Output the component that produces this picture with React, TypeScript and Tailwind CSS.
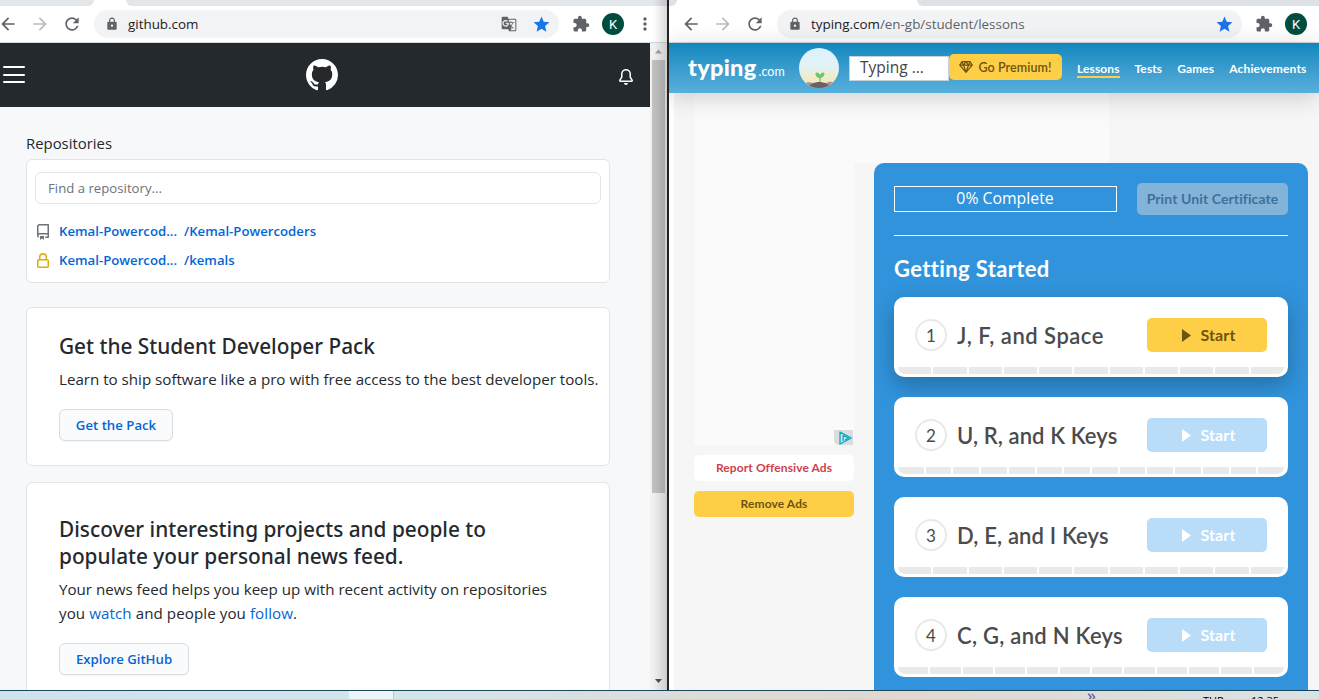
import React from "react";
import { MdArrowBack, MdArrowForward, MdRefresh, MdLock, MdStar, MdExtension, MdMoreVert, MdGTranslate } from "react-icons/md";

function Octicon({ d, size = 16, className = "" }: { d: string; size?: number; className?: string }) {
  return (
    <svg width={size} height={size} viewBox="0 0 16 16" fill="currentColor" fillRule="evenodd" className={`shrink-0 ${className}`}>
      <path d={d} />
    </svg>
  );
}

const MARK =
  "M8 0C3.58 0 0 3.58 0 8c0 3.54 2.29 6.53 5.47 7.59.4.07.55-.17.55-.38 0-.19-.01-.82-.01-1.49-2.01.37-2.53-.49-2.69-.94-.09-.23-.48-.94-.82-1.13-.28-.15-.68-.52-.01-.53.63-.01 1.08.58 1.23.82.72 1.21 1.87.87 2.33.66.07-.52.28-.87.51-1.07-1.78-.2-3.64-.89-3.64-3.95 0-.87.31-1.59.82-2.15-.08-.2-.36-1.02.08-2.12 0 0 .67-.21 2.2.82.64-.18 1.32-.27 2-.27.68 0 1.36.09 2 .27 1.53-1.04 2.2-.82 2.2-.82.44 1.1.16 1.92.08 2.12.51.56.82 1.27.82 2.15 0 3.07-1.87 3.75-3.65 3.95.29.25.54.73.54 1.48 0 1.07-.01 1.93-.01 2.2 0 .21.15.46.55.38A8.013 8.013 0 0016 8c0-4.42-3.58-8-8-8z";
const REPO =
  "M2 2.5A2.5 2.5 0 014.5 0h8.75a.75.75 0 01.75.75v12.5a.75.75 0 01-.75.75h-2.5a.75.75 0 110-1.5h1.75v-2h-8a1 1 0 00-.714 1.7.75.75 0 01-1.072 1.05A2.495 2.495 0 012 11.5v-9zm10.5-1V9h-8c-.356 0-.694.074-1 .208V2.5a1 1 0 011-1h8zM5 12.25v3.25a.25.25 0 00.4.2l1.45-1.087a.25.25 0 01.3 0L8.6 15.7a.25.25 0 00.4-.2v-3.25a.25.25 0 00-.25-.25h-3.5a.25.25 0 00-.25.25z";
const LOCK =
  "M4 4v2h-.25A1.75 1.75 0 002 7.75v5.5c0 .966.784 1.75 1.75 1.75h8.5A1.75 1.75 0 0014 13.25v-5.5A1.75 1.75 0 0012.25 6H12V4a4 4 0 10-8 0zm6.5 2V4a2.5 2.5 0 10-5 0v2h5zM12 7.5h.25a.25.25 0 01.25.25v5.5a.25.25 0 01-.25.25h-8.5a.25.25 0 01-.25-.25v-5.5a.25.25 0 01.25-.25H12z";
const BELL =
  "M8 16a2 2 0 001.985-1.75c.017-.137-.097-.25-.235-.25h-3.5c-.138 0-.252.113-.235.25A2 2 0 008 16zM8 1.5A3.5 3.5 0 004.5 5v2.947c0 .346-.102.683-.294.97l-1.703 2.583h10.994l-1.703-2.583a1.75 1.75 0 01-.294-.97V5A3.5 3.5 0 008 1.5zM3 5a5 5 0 0110 0v2.947c0 .05.015.098.042.139l1.703 2.555A1.518 1.518 0 0113.482 13H2.518a1.518 1.518 0 01-1.263-2.36l1.703-2.554A.25.25 0 003 7.947V5z";

function Avatar() {
  return (
    <div className="flex h-[22px] w-[22px] shrink-0 items-center justify-center rounded-full bg-[#004d40] font-['Roboto',sans-serif] text-[13px] leading-none text-white">
      K
    </div>
  );
}

function NavButtons() {
  return (
    <div className="flex shrink-0 items-center gap-3 text-[#5f6368]">
      <MdArrowBack size={20} />
      <MdArrowForward size={20} className="text-[#babcbe]" />
      <MdRefresh size={20} />
    </div>
  );
}

function GithubWindow() {
  return (
    <section className="relative flex h-full w-[667px] shrink-0 flex-col bg-white font-['Open_Sans',sans-serif] text-[#24292e]">
      <div className="flex h-[6px] shrink-0 justify-between">
        <div className="w-[94px] rounded-br-[7px] bg-[#e3e7ea]" />
        <div className="w-[541px] rounded-bl-[7px] bg-[#e3e7ea]" />
      </div>
      <div className="flex h-[37px] shrink-0 items-center border-b border-[#d5d9dc]">
        <div className="-ml-[2px]">
          <NavButtons />
        </div>
        <div className="ml-[12px] flex h-7 w-[465px] items-center rounded-full bg-[#f1f3f4] pl-[11px] pr-[8px]">
          <MdLock size={14} className="text-[#5f6368]" />
          <span className="ml-[9px] pt-px text-[13.4px] leading-none text-[#202124]">github.com</span>
          <MdGTranslate size={16} className="ml-auto text-[#5f6368]" />
          <MdStar size={19} className="ml-[15px] text-[#1a73e8]" />
        </div>
        <MdExtension size={18} className="ml-[13px] text-[#5f6368]" />
        <div className="ml-[12px]">
          <Avatar />
        </div>
        <MdMoreVert size={20} className="ml-[11px] text-[#5f6368]" />
      </div>
      <div className="flex min-h-0 flex-1">
        <div className="flex w-[650px] flex-col overflow-hidden bg-[#f6f8fa]">
          <header className="flex h-16 shrink-0 items-center justify-between bg-[#24292e] pl-[3px] pr-[16px] text-white">
            <div className="-mt-px flex w-[22px] flex-col gap-[5.5px]">
              <div className="h-[2px] rounded bg-white" />
              <div className="h-[2px] rounded bg-white" />
              <div className="h-[2px] rounded bg-white" />
            </div>
            <Octicon d={MARK} size={32} />
            <Octicon d={BELL} className="mt-[3px]" />
          </header>
          <div className="pl-[26px] pr-[40px]">
            <h2 className="mt-[26px] h-[26px] text-[14.9px] leading-5">Repositories</h2>
            <div className="h-[124px] rounded-md border border-[#e1e4e8] bg-white px-2 pt-3">
              <div className="flex h-8 items-center rounded-md border border-[#e1e4e8] px-3 pt-px text-[13.2px] leading-none text-[#6a737d]">
                Find a repository...
              </div>
              <div className="mt-[17px] flex h-5 items-center text-[13.2px] font-semibold leading-none text-[#0366d6]">
                <Octicon d={REPO} className="mt-px text-[#6a737d]" />
                <span className="ml-2 pt-[2px]">Kemal-Powercod...</span>
                <span className="ml-[7px] pt-[2px]">/Kemal-Powercoders</span>
              </div>
              <div className="mt-[9px] flex h-5 items-center text-[13.2px] font-semibold leading-none text-[#0366d6]">
                <Octicon d={LOCK} className="mt-px text-[#dbab09]" />
                <span className="ml-2 pt-[2px]">Kemal-Powercod...</span>
                <span className="ml-[7px] pt-[2px]">/kemals</span>
              </div>
            </div>
            <div className="mt-6 h-[159px] rounded-md border border-[#e1e4e8] bg-white px-8 pt-[25px]">
              <h3 className="font-['Noto_Sans','Open_Sans',sans-serif] text-[20.8px] font-medium leading-[27px]">Get the Student Developer Pack</h3>
              <p className="mt-[7px] whitespace-nowrap text-[15.13px] leading-6">Learn to ship software like a pro with free access to the best developer tools.</p>
              <div className="mt-[18px] flex h-8 w-[114px] items-center justify-center whitespace-nowrap rounded-md border border-[#dadde0] bg-[#fafbfc] pt-[2px] text-[13.2px] font-semibold leading-none text-[#0366d6] shadow-[0_1px_0_rgba(27,31,35,0.04)]">
                Get the Pack
              </div>
            </div>
            <div className="mt-4 h-[240px] rounded-md border border-[#e1e4e8] bg-white px-8 pt-[33px]">
              <h3 className="whitespace-nowrap font-['Noto_Sans','Open_Sans',sans-serif] text-[20.8px] font-medium leading-[27px]">
                Discover interesting projects and people to
                <br />
                populate your personal news feed.
              </h3>
              <p className="mt-[7px] whitespace-nowrap text-[15.13px] leading-6">
                Your news feed helps you keep up with recent activity on repositories
                <br />
                <span className="tracking-[0.08px]">you <span className="text-[#0366d6]">watch</span> and people you <span className="text-[#0366d6]">follow</span>.</span>
              </p>
              <div className="mt-[18px] flex h-8 w-[130px] items-center justify-center whitespace-nowrap rounded-md border border-[#dadde0] bg-[#fafbfc] pt-[2px] text-[13.2px] font-semibold leading-none text-[#0366d6] shadow-[0_1px_0_rgba(27,31,35,0.04)]">
                Explore GitHub
              </div>
            </div>
          </div>
        </div>
        <div className="flex w-[17px] flex-col items-center bg-[#f1f1f1]">
          <svg className="mt-[6px] shrink-0" width="7" height="5" viewBox="0 0 7 5">
            <path d="M0 4.500L3.500 0.500L7 4.500Z" fill="#a3a3a3" />
          </svg>
          <div className="mt-[6px] h-[433px] w-[13px] shrink-0 bg-[#c1c1c1]" />
          <svg className="mb-[7px] mt-auto shrink-0" width="7" height="4" viewBox="0 0 7 4">
            <path d="M0 0L3.500 4L7 0Z" fill="#505050" />
          </svg>
        </div>
      </div>
      <div className="absolute inset-y-0 right-0 w-[14px] bg-gradient-to-r from-transparent to-black/15" />
    </section>
  );
}

type Lesson = { n: number; title: string; parts: number; tracking: string };

const lessons: Lesson[] = [
  { n: 1, title: "J, F, and Space", parts: 11, tracking: "tracking-[0.5px]" },
  { n: 2, title: "U, R, and K Keys", parts: 14, tracking: "tracking-[0.1px]" },
  { n: 3, title: "D, E, and I Keys", parts: 11, tracking: "tracking-[0.15px]" },
  { n: 4, title: "C, G, and N Keys", parts: 12, tracking: "tracking-[0.27px]" },
];

function LessonCard({ lesson }: { lesson: Lesson }) {
  const active = lesson.n === 1;
  return (
    <div className={`flex h-20 shrink-0 flex-col rounded-[10px] bg-white px-1 pb-[3px] ${active ? "shadow-[0_8px_22px_rgba(0,0,0,0.25)]" : ""}`}>
      <div className="flex h-[70px] items-center pl-[17px] pr-[17px] pt-[6px]">
        <div className="flex h-8 w-8 items-center justify-center rounded-full border-2 border-[#e9e9e9] text-[17px] leading-none text-[#4b4b4b]">{lesson.n}</div>
        <div className={`ml-[10px] whitespace-nowrap pt-[2px] text-[22px] font-semibold leading-none text-[#4b4b4b] ${lesson.tracking}`}>{lesson.title}</div>
        <div className={`ml-auto flex h-[34px] w-[120px] items-center justify-center gap-[10px] rounded-[5px] pl-[3px] text-[16px] font-bold leading-none tracking-[0.1px] ${active ? "bg-[#ffce47] text-[#6d5412]" : "bg-[#b9dcf8] text-white"}`}>
          <svg width="9" height="13" viewBox="0 0 9 13">
            <path d="M0 0L9 6.500L0 13Z" fill="currentColor" />
          </svg>
          Start
        </div>
      </div>
      <div className="flex h-[7px] gap-[2px] overflow-hidden rounded-b-[7px]">
        {Array.from({ length: lesson.parts }, (_, i) => (
          <div key={i} className="flex-1 bg-[#e9e9e9]" />
        ))}
      </div>
    </div>
  );
}

function Sprout() {
  return (
    <svg width="40" height="40" viewBox="0 0 40 40" className="shrink-0">
      <defs>
        <linearGradient id="sky" x1="0" y1="0" x2="0" y2="1">
          <stop offset="0" stopColor="#dcf2fd" />
          <stop offset="0.5" stopColor="#e2f3f3" />
          <stop offset="0.75" stopColor="#f0ebc8" />
          <stop offset="1" stopColor="#f1e9bd" />
        </linearGradient>
        <clipPath id="disc">
          <circle cx="20" cy="20" r="20" />
        </clipPath>
      </defs>
      <g clipPath="url(#disc)">
        <rect width="40" height="40" fill="url(#sky)" />
        <path d="M6 36C9 33 11 35 14 35L28 35C30 33 33 34 35 35L34 40H6Z" fill="#b5918c" />
        <path d="M8 40C11 36 16 34 20 34C25 34 30 36 32 40Z" fill="#6e625f" />
        <path d="M21 34V29" stroke="#6cc66b" strokeWidth="1.300" />
        <path d="M21 29.500C17 29.500 17 27 17 25C20 25 21 26.500 21 29.500C21 26.500 22 25 25 25C25 27.500 24 29.500 21 29.500Z" fill="#6cc66b" stroke="#6cc66b" />
      </g>
    </svg>
  );
}

function TypingWindow() {
  return (
    <section className="flex h-full w-[650px] shrink-0 flex-col overflow-hidden bg-white">
      <div className="flex h-[6px] shrink-0 justify-between">
        <div className="w-[8px] rounded-br-[7px] bg-[#dee1e6]" />
        <div className="w-[402px] rounded-bl-[7px] bg-[#dee1e6]" />
      </div>
      <div className="flex h-[37px] shrink-0 items-center border-b border-[#d5d9dc] pl-[12px]">
        <NavButtons />
        <div className="ml-[12px] flex h-7 w-[465px] items-center rounded-full bg-[#f1f3f4] pl-[11px] pr-[8px] font-['Open_Sans',sans-serif]">
          <MdLock size={14} className="text-[#5f6368]" />
          <span className="ml-[9px] whitespace-nowrap pt-px text-[13.4px] leading-none text-[#5f6368]">
            <span className="text-[#202124]">typing.com</span>/en-gb/student/lessons
          </span>
          <MdStar size={19} className="ml-auto text-[#1a73e8]" />
        </div>
        <MdExtension size={18} className="ml-[13px] text-[#5f6368]" />
        <div className="ml-[12px]">
          <Avatar />
        </div>
      </div>
      <header className="relative z-10 flex h-[50px] shrink-0 items-center bg-gradient-to-b from-[#0b87be] to-[#57b0dc] pl-[19px] font-['Lato',sans-serif] text-white shadow-[0_4px_24px_rgba(0,0,0,0.18)]">
        <div className="flex w-[111px] items-baseline whitespace-nowrap leading-none">
          <span className="text-[23.5px] font-black tracking-[0.3px]">typing</span>
          <span className="ml-[2px] text-[12.5px]">.com</span>
        </div>
        <Sprout />
        <div className="ml-[10px] flex h-[25px] w-[100px] items-center border border-[#c5d4dc] bg-white pl-[10px] font-['Open_Sans',sans-serif] text-[15.5px] leading-none text-[#444]">Typing ...</div>
        <div className="-mt-[2px] flex h-[26px] w-[113px] items-center justify-center gap-[5px] whitespace-nowrap rounded-[5px] bg-[#ffce47] pt-[3px] text-[12.5px] font-semibold leading-none tracking-[0.1px] text-[#6d5412]">
          <svg width="14" height="12" viewBox="0 0 14 12" fill="none" stroke="currentColor" strokeWidth="1.200" strokeLinejoin="round" className="-mt-[3px]">
            <path d="M3 0.700H11L13.300 4.200L7 11.300L0.700 4.200ZM0.700 4.200H13.300M3 0.700L4.500 4.200L7 0.700L9.500 4.200L11 0.700M4.500 4.200L7 11.300L9.500 4.200" />
          </svg>
          Go Premium!
        </div>
        <nav className="ml-[15px] mt-[3px] flex items-center gap-[15px] text-[12px] font-bold leading-[14px] tracking-[0.1px]">
          <span className="border-b-2 border-[#ffce47]">Lessons</span>
          <span className="pb-[2px]">Tests</span>
          <span className="pb-[2px]">Games</span>
          <span className="pb-[2px] tracking-[0.15px]">Achievements</span>
        </nav>
      </header>
      <main className="ml-[5px] flex min-h-0 flex-1 flex-col bg-[#f6f6f6] pl-5 font-['Lato',sans-serif]">
        <div className="h-[70px] w-[415px] shrink-0 bg-[#fafafa]" />
        <div className="flex min-h-0 flex-1 items-start gap-5">
          <aside className="w-[160px] shrink-0 text-[12px] font-bold leading-none tracking-[0.1px]">
            <div className="flex h-[282px] items-end justify-end bg-[#fafafa] pr-px">
              <div className="flex h-[15px] w-[19px] items-center justify-center rounded-bl-[5px] bg-[#dcdcdc] pl-1">
                <svg width="13" height="14" viewBox="0 0 13 14" fill="none" stroke="#00aecd" strokeWidth="1.300" strokeLinejoin="round" className="shrink-0">
                  <path d="M1 1V13L12.300 7ZM4.200 10V4.200L9.500 7L6 9" />
                </svg>
              </div>
            </div>
            <div className="mt-[10px] flex h-[26px] items-center justify-center rounded-[5px] bg-white text-[#d0414b]">Report Offensive Ads</div>
            <div className="mt-[10px] flex h-[26px] items-center justify-center rounded-[5px] bg-[#ffce47] text-[#6d5412]">Remove Ads</div>
          </aside>
          <div className="flex h-[560px] w-[434px] shrink-0 flex-col rounded-[10px] bg-[#3193db] px-5 pt-5">
            <div className="flex h-[53px] items-start justify-between border-b border-white">
              <div className="mt-[3px] flex h-[26px] w-[223px] items-center justify-center border border-white pr-px font-['Open_Sans',sans-serif] text-[15.8px] leading-none text-white">0% Complete</div>
              <div className="flex h-8 w-[151px] items-center justify-center whitespace-nowrap rounded-[5px] bg-[#83b3d8] text-[14px] font-bold leading-none tracking-[0.1px] text-[#3d7199]">Print Unit Certificate</div>
            </div>
            <h2 className="mt-[18px] h-[43px] text-[22px] font-bold leading-[29px] tracking-[0.36px] text-white">Getting Started</h2>
            <div className="flex flex-col gap-5">
              {lessons.map((l) => (
                <LessonCard key={l.n} lesson={l} />
              ))}
            </div>
          </div>
        </div>
      </main>
    </section>
  );
}

export default function App() {
  return (
    <div className="flex h-[699px] w-[1319px] flex-col overflow-hidden">
      <div className="flex h-[690px] shrink-0">
        <GithubWindow />
        <div className="w-[2px] shrink-0 bg-[#222222]" />
        <TypingWindow />
      </div>
      <footer className="flex h-[9px] overflow-hidden border-t border-[#1c4660] bg-gradient-to-r from-[#cfe3ec] via-[#d6e5ec] to-[#d8e4e3]">
        <div className="ml-[349px] h-full w-[45px] shrink-0 border-r border-[#b6cad2] bg-[#ecf5f7]" />
        <div className="flex h-full flex-1 bg-gradient-to-r from-transparent via-[#e0d8ce] to-[#d8e4e3] pl-[693px] font-['Open_Sans',sans-serif] leading-none">
          <span className="-mt-[5px] w-[116px] shrink-0 text-[18px] text-[#5858a0]">»</span>
          <span className="mt-[4px] w-[48px] shrink-0 text-[11px] text-black">TUR</span>
          <span className="mt-[4px] shrink-0 text-[11px] text-black">12:35</span>
        </div>
      </footer>
    </div>
  );
}
